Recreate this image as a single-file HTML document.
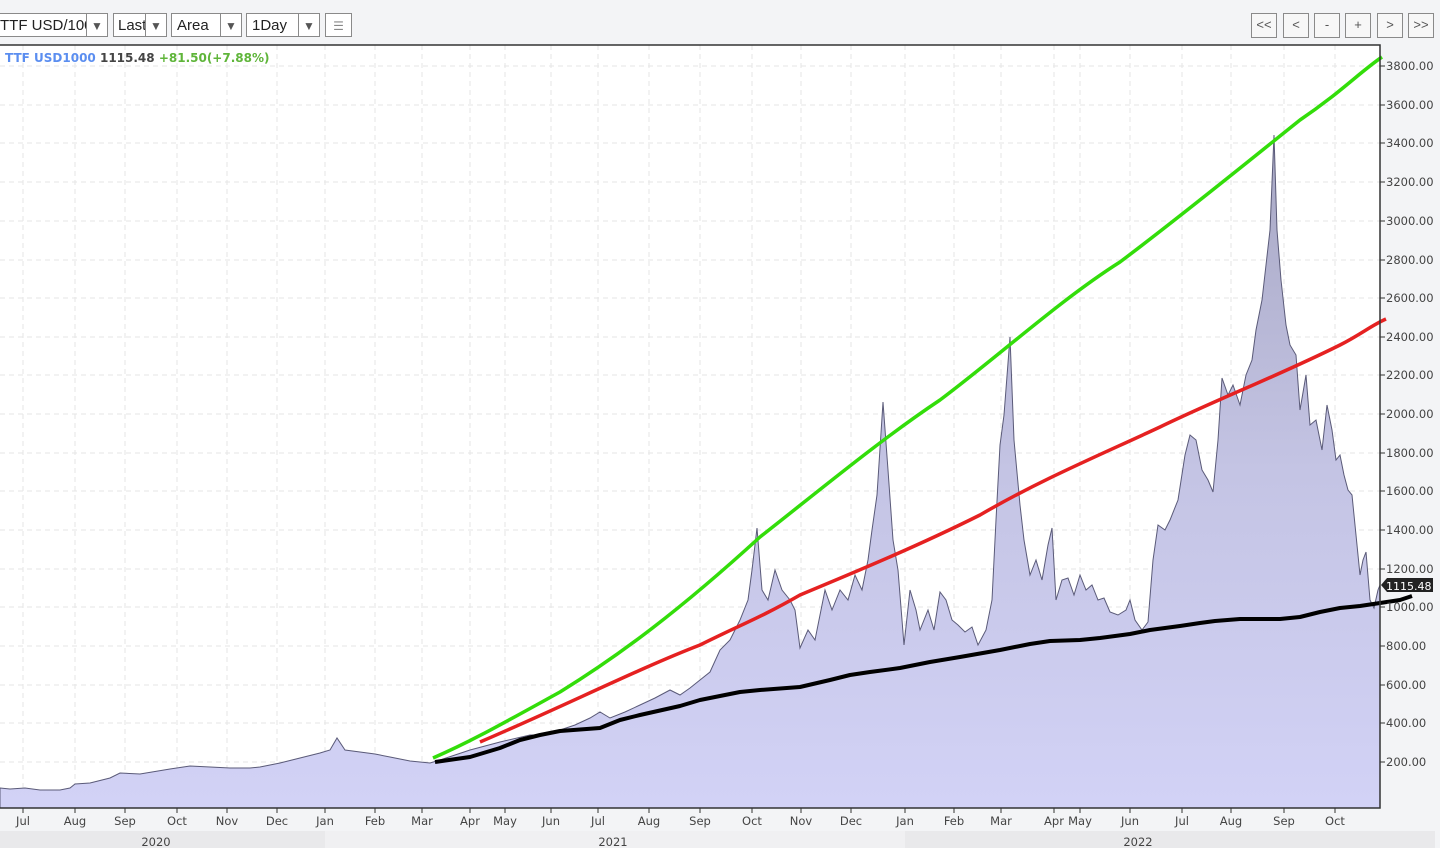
<!DOCTYPE html>
<html><head><meta charset="utf-8"><style>
body{margin:0;width:1440px;height:848px;background:#f3f4f6;font-family:"Liberation Sans",sans-serif;overflow:hidden;position:relative}
.b{position:absolute;top:13px;height:24px;border:1px solid #8a8a8a;background:#fff;font-size:15px;line-height:24px;box-sizing:border-box;color:#222;overflow:hidden;white-space:nowrap}
.dd{position:absolute;right:0;top:0;width:20px;height:22px;border-left:1px solid #8a8a8a;font-size:12px;text-align:center;color:#555;background:#fff}
.nb{position:absolute;top:13px;width:26px;height:25px;border:1px solid #8a8a8a;box-sizing:border-box;font-size:13px;text-align:center;line-height:22px;color:#555;background:#f7f7f7}
</style></head><body>
<div class="b" style="left:-2px;width:110px;padding-left:1px">TTF USD/100<span class="dd">▼</span></div>
<div class="b" style="left:113px;width:54px;padding-left:4px">Last<span class="dd">▼</span></div>
<div class="b" style="left:171px;width:71px;padding-left:5px">Area<span class="dd">▼</span></div>
<div class="b" style="left:246px;width:74px;padding-left:5px">1Day<span class="dd">▼</span></div>
<div class="b" style="left:325px;width:27px;text-align:center;color:#888;font-size:12px">☰</div>
<div class="nb" style="left:1251px">&lt;&lt;</div>
<div class="nb" style="left:1283px">&lt;</div>
<div class="nb" style="left:1314px">-</div>
<div class="nb" style="left:1345px">+</div>
<div class="nb" style="left:1377px">&gt;</div>
<div class="nb" style="left:1408px">&gt;&gt;</div>
<svg width="1440" height="848" style="position:absolute;left:0;top:0">
<rect x="0" y="45" width="1380" height="763" fill="#fff"/>
<g stroke="#e6e6e6" stroke-dasharray="5,4" stroke-width="1">
<path d="M0 66H1380M0 105H1380M0 143H1380M0 182H1380M0 221H1380M0 260H1380M0 298H1380M0 337H1380M0 375H1380M0 414H1380M0 453H1380M0 491H1380M0 530H1380M0 569H1380M0 607H1380M0 646H1380M0 685H1380M0 723H1380M0 762H1380"/>
<path d="M23 45V808M75 45V808M125 45V808M177 45V808M227 45V808M277 45V808M325 45V808M375 45V808M422 45V808M470 45V808M505 45V808M551 45V808M598 45V808M649 45V808M700 45V808M752 45V808M801 45V808M851 45V808M905 45V808M954 45V808M1001 45V808M1054 45V808M1080 45V808M1130 45V808M1182 45V808M1231 45V808M1284 45V808M1335 45V808"/>
</g>
<defs><linearGradient id="g" x1="0" y1="0" x2="0" y2="1"><stop offset="0" stop-color="#a8a8c4"/><stop offset="0.5" stop-color="#c4c4e4"/><stop offset="1" stop-color="#d2d2f6"/></linearGradient></defs>
<path d="M0 788L10 789L25 788L40 790L60 790L70 788L75 784L90 783L110 778L120 773L140 774L170 769L190 766L210 767L230 768L250 768L260 767L280 763L300 758L320 753L330 750L337 738L345 750L360 752L375 754L390 757L410 761L430 763L440 760L470 750L500 742L530 735L545 735L560 730L575 725L590 718L600 712L610 718L625 712L640 705L655 698L670 690L680 695L690 688L700 680L710 672L720 650L730 640L740 620L748 600L752 570L757 528L762 590L768 600L775 570L782 590L790 600L795 610L800 648L808 630L815 640L825 590L832 610L840 590L848 600L855 575L862 590L868 560L872 530L877 495L883 402L888 470L893 540L898 570L904 645L910 590L916 610L920 630L928 610L934 630L940 592L946 600L952 620L958 625L965 632L972 627L978 645L986 630L992 600L996 520L1000 445L1004 415L1010 337L1014 440L1020 505L1024 540L1030 575L1036 560L1042 580L1048 545L1052 528L1056 600L1062 580L1068 578L1074 595L1080 575L1086 590L1092 585L1098 600L1104 598L1110 612L1118 615L1126 610L1130 600L1135 620L1142 630L1148 622L1153 560L1158 525L1165 530L1170 520L1178 500L1185 455L1190 435L1196 440L1202 470L1208 480L1213 492L1218 440L1222 378L1228 395L1233 385L1240 405L1246 375L1252 360L1256 330L1262 300L1266 265L1270 230L1274 135L1277 230L1281 280L1286 325L1290 345L1296 355L1300 410L1306 375L1310 425L1316 420L1322 450L1327 405L1332 430L1336 460L1340 455L1344 475L1348 490L1352 495L1356 535L1360 575L1363 560L1366 552L1370 600L1374 608L1378 590L1380 585L1380 808L0 808Z" fill="url(#g)" stroke="#5a5a78" stroke-width="1"/>
<path d="M433 758C470 742 500 725 560 692C620 655 680 610 760 537C820 490 880 440 940 400C1000 355 1060 300 1120 262C1180 217 1240 168 1300 120C1340 93 1360 72 1382 57" fill="none" stroke="#33dd0a" stroke-width="3.5"/>
<path d="M480 742C560 708 640 668 700 645C740 625 760 618 800 595C860 570 920 545 980 515C1040 480 1100 455 1160 427C1220 398 1280 375 1340 345C1360 335 1372 325 1386 319" fill="none" stroke="#e52121" stroke-width="3.5"/>
<path d="M435 762L470 757L500 748L520 740L540 735L560 731L600 728L620 720L640 715L680 706L700 700L740 692L760 690L800 687L830 680L850 675L870 672L900 668L930 662L960 657L1000 650L1030 644L1050 641L1080 640L1100 638L1130 634L1150 630L1180 626L1200 623L1215 621L1240 619L1280 619L1300 617L1320 612L1340 608L1360 606L1380 603L1400 600L1412 596" fill="none" stroke="#000" stroke-width="4" stroke-linejoin="round"/>
<path d="M0 45H1380V808H0" fill="none" stroke="#333" stroke-width="1.5"/>
<g stroke="#333"><path d="M1380 66h5M1380 105h5M1380 143h5M1380 182h5M1380 221h5M1380 260h5M1380 298h5M1380 337h5M1380 375h5M1380 414h5M1380 453h5M1380 491h5M1380 530h5M1380 569h5M1380 607h5M1380 646h5M1380 685h5M1380 723h5M1380 762h5"/>
<path d="M23 808v5M75 808v5M125 808v5M177 808v5M227 808v5M277 808v5M325 808v5M375 808v5M422 808v5M470 808v5M505 808v5M551 808v5M598 808v5M649 808v5M700 808v5M752 808v5M801 808v5M851 808v5M905 808v5M954 808v5M1001 808v5M1054 808v5M1080 808v5M1130 808v5M1182 808v5M1231 808v5M1284 808v5M1335 808v5"/></g>
<g font-family="DejaVu Sans,sans-serif" font-size="11.5" fill="#444">
<text x="1386" y="70">3800.00</text><text x="1386" y="109">3600.00</text><text x="1386" y="147">3400.00</text><text x="1386" y="186">3200.00</text><text x="1386" y="225">3000.00</text><text x="1386" y="264">2800.00</text><text x="1386" y="302">2600.00</text><text x="1386" y="341">2400.00</text><text x="1386" y="379">2200.00</text><text x="1386" y="418">2000.00</text><text x="1386" y="457">1800.00</text><text x="1386" y="495">1600.00</text><text x="1386" y="534">1400.00</text><text x="1386" y="573">1200.00</text><text x="1386" y="611">1000.00</text><text x="1386" y="650">800.00</text><text x="1386" y="689">600.00</text><text x="1386" y="727">400.00</text><text x="1386" y="766">200.00</text>
</g>
<path d="M1381 585L1387 578H1433V592H1387Z" fill="#222"/>
<text x="1386" y="590" font-family="DejaVu Sans,sans-serif" font-size="11" fill="#fff">1115.48</text>
<g font-family="DejaVu Sans,sans-serif" font-size="11.5" fill="#444" text-anchor="middle">
<text x="23" y="825">Jul</text><text x="75" y="825">Aug</text><text x="125" y="825">Sep</text><text x="177" y="825">Oct</text><text x="227" y="825">Nov</text><text x="277" y="825">Dec</text><text x="325" y="825">Jan</text><text x="375" y="825">Feb</text><text x="422" y="825">Mar</text><text x="470" y="825">Apr</text><text x="505" y="825">May</text><text x="551" y="825">Jun</text><text x="598" y="825">Jul</text><text x="649" y="825">Aug</text><text x="700" y="825">Sep</text><text x="752" y="825">Oct</text><text x="801" y="825">Nov</text><text x="851" y="825">Dec</text><text x="905" y="825">Jan</text><text x="954" y="825">Feb</text><text x="1001" y="825">Mar</text><text x="1054" y="825">Apr</text><text x="1080" y="825">May</text><text x="1130" y="825">Jun</text><text x="1182" y="825">Jul</text><text x="1231" y="825">Aug</text><text x="1284" y="825">Sep</text><text x="1335" y="825">Oct</text>
</g>
<rect x="0" y="831" width="325" height="17" fill="#e9e9eb"/>
<rect x="325" y="831" width="580" height="17" fill="#f0f0f2"/>
<rect x="905" y="831" width="530" height="17" fill="#e9e9eb"/>
<g font-family="DejaVu Sans,sans-serif" font-size="11.5" fill="#444" text-anchor="middle"><text x="156" y="846">2020</text><text x="613" y="846">2021</text><text x="1138" y="846">2022</text></g>
<text x="5" y="62" font-family="DejaVu Sans,sans-serif" font-size="12" font-weight="bold"><tspan fill="#5b8ef0">TTF USD1000</tspan> <tspan fill="#444">1115.48</tspan> <tspan fill="#5fb53a">+81.50(+7.88%)</tspan></text>
</svg>
</body></html>
